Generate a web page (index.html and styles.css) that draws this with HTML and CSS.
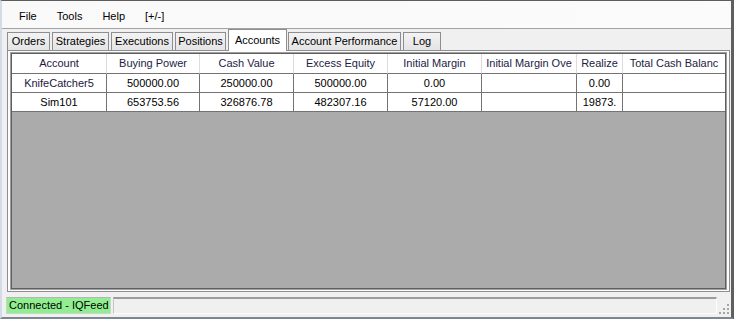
FILE: index.html
```html
<!DOCTYPE html>
<html lang="en">
<head>
  <meta charset="UTF-8">
  <title>Accounts</title>
  <link rel="stylesheet" href="styles.css">
</head>
<body>
  <div class="window">
    <div class="menubar">
      <span class="menu-item">File</span>
      <span class="menu-item">Tools</span>
      <span class="menu-item">Help</span>
      <span class="menu-item">[+/-]</span>
    </div>
    <div class="tabstrip">
      <div class="tab w-orders">Orders</div>
      <div class="tab w-strategies">Strategies</div>
      <div class="tab w-executions">Executions</div>
      <div class="tab w-positions">Positions</div>
      <div class="tab active w-accounts">Accounts</div>
      <div class="tab w-perf">Account Performance</div>
      <div class="tab w-log">Log</div>
    </div>
    <div class="panel">
      <div class="grid">
        <div class="grid-inner">
          <div class="row head">
            <div class="cell acct">Account</div>
            <div class="cell">Buying Power</div>
            <div class="cell">Cash Value</div>
            <div class="cell">Excess Equity</div>
            <div class="cell">Initial Margin</div>
            <div class="cell">Initial Margin Ove</div>
            <div class="cell">Realize</div>
            <div class="cell last">Total Cash Balanc</div>
          </div>
          <div class="row">
            <div class="cell acct">KnifeCatcher5</div>
            <div class="cell">500000.00</div>
            <div class="cell">250000.00</div>
            <div class="cell">500000.00</div>
            <div class="cell">0.00</div>
            <div class="cell"></div>
            <div class="cell">0.00</div>
            <div class="cell last"></div>
          </div>
          <div class="row">
            <div class="cell">Sim101</div>
            <div class="cell">653753.56</div>
            <div class="cell">326876.78</div>
            <div class="cell">482307.16</div>
            <div class="cell">57120.00</div>
            <div class="cell"></div>
            <div class="cell">19873.</div>
            <div class="cell last"></div>
          </div>
        </div>
      </div>
    </div>
    <div class="statusbar">
      <div class="status-conn">Connected - IQFeed</div>
      <div class="status-msg"></div>
      <svg class="grip" width="12" height="12" viewBox="0 0 12 12">
        <rect x="9" y="1" width="2" height="2" fill="#a5a5a5"/>
        <rect x="5" y="5" width="2" height="2" fill="#a5a5a5"/>
        <rect x="9" y="5" width="2" height="2" fill="#a5a5a5"/>
        <rect x="1" y="9" width="2" height="2" fill="#a5a5a5"/>
        <rect x="5" y="9" width="2" height="2" fill="#a5a5a5"/>
        <rect x="9" y="9" width="2" height="2" fill="#a5a5a5"/>
      </svg>
    </div>
  </div>
</body>
</html>
```

FILE: styles.css
```css
body {
  margin: 0;
  padding: 0;
  font-family: "Liberation Sans", Arial, sans-serif;
  font-size: 11px;
  color: #000;
}
.window {
  width: 734px;
  height: 319px;
  box-sizing: border-box;
  display: flex;
  flex-direction: column;
  background-color: #f0f0f0;
  border-top: 1px solid #5c5c5c;
  border-left: 2px solid #d2dbe6;
  border-right: 3px solid #5f5f5f;
  border-bottom: 2px solid #7d8794;
}
.menubar {
  height: 28px;
  box-sizing: border-box;
  padding: 9px 0 0 7px;
  line-height: 13px;
  background: linear-gradient(to right, #f9f9f9, #fbfbfc);
  border-bottom: 1px solid #a3a3a3;
  display: flex;
}
.menu-item {
  padding: 0 10px;
}
.tabstrip {
  height: 21px;
  display: flex;
  align-items: flex-end;
  padding-left: 5px;
}
.tab {
  height: 18px;
  box-sizing: border-box;
  line-height: 16px;
  text-align: center;
  white-space: nowrap;
  background: linear-gradient(#f3f3f3, #e4e4e4);
  border: 1px solid #8c8e94;
  border-bottom: none;
  margin-left: 2px;
}
.tab:first-child {
  margin-left: 0;
}
.tab.active {
  height: 22px;
  margin-bottom: -1px;
  padding-top: 2px;
  background: #fff;
  position: relative;
  z-index: 1;
}
.tab.active + .tab {
  margin-left: 1px;
}
.w-orders { width: 43px; }
.w-strategies { width: 57px; }
.w-executions { width: 62px; }
.w-positions { width: 51px; }
.w-accounts { width: 59px; }
.w-perf { width: 113px; }
.w-log { width: 38px; }
.panel {
  height: 242px;
  box-sizing: border-box;
  margin: 0 1px 0 5px;
  padding: 1px 2px;
  background-color: #fcfcfc;
  border: 1px solid #8c8e94;
}
.grid {
  height: 100%;
  box-sizing: border-box;
  border: 1px solid #a0a0a0;
}
.grid-inner {
  height: 100%;
  box-sizing: border-box;
  border: 1px solid #5f5f5f;
  background-color: #ababab;
}
.row {
  display: grid;
  grid-template-columns: 95px 93px 94px 94px 94px 95px 46px 102px;
  height: 19px;
  background-color: #fff;
}
.row.head {
  height: 20px;
}
.cell {
  box-sizing: border-box;
  text-align: center;
  white-space: nowrap;
  overflow: hidden;
  line-height: 18px;
  border-right: 1px solid #737373;
  border-bottom: 1px solid #737373;
}
.head .cell {
  line-height: 19px;
  color: #1c1c44;
  border-right-color: #dcdcdc;
}
.cell.acct {
  color: #24163f;
}
.cell.last {
  border-right: none;
}
.statusbar {
  height: 25px;
  display: flex;
  align-items: flex-start;
  padding: 5px 0 0 4px;
  box-sizing: border-box;
}
.status-conn {
  width: 105px;
  height: 17px;
  box-sizing: border-box;
  padding-left: 2px;
  line-height: 15px;
  white-space: nowrap;
  background-color: #90ee90;
  border: 1px solid #c8d8c8;
  border-top-color: #b5b5b5;
}
.status-msg {
  width: 604px;
  height: 17px;
  box-sizing: border-box;
  margin-left: 2px;
  border-top: 2px solid #9c9c9c;
  border-left: 1px solid #c6c6c6;
  border-bottom: 1px solid #fdfdfd;
  border-right: 1px solid #fdfdfd;
}
.grip {
  margin: 6px 0 0 1px;
}
```
